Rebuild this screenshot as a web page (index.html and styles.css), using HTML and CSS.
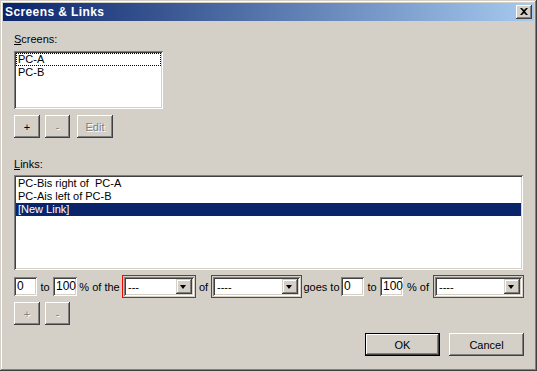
FILE: index.html
```html
<!DOCTYPE html>
<html lang="en">
<head>
    <meta charset="UTF-8">
    <title>Screens &amp; Links</title>
    <link rel="stylesheet" href="styles.css">
</head>
<body>

<div class="window">
    <div class="titlebar">
        <span class="title">Screens &amp; Links</span>
        <button class="close-btn">
            <svg width="8" height="7" viewBox="0 0 8 7">
                <path d="M0 0h2l2 2l2-2h2l-3 3.5l3 3.5h-2l-2-2l-2 2h-2l3-3.5z" fill="#000"/>
            </svg>
        </button>
    </div>

    <div class="dialog">
        <div class="label label-screens"><u>S</u>creens:</div>
        <div class="listbox screens-list">
            <div class="item focus">PC-A</div>
            <div class="item">PC-B</div>
        </div>
        <div class="btn-row">
            <button class="btn btn-plus">+</button>
            <button class="btn btn-minus disabled">-</button>
            <button class="btn btn-edit disabled">Edit</button>
        </div>

        <div class="label label-links"><u>L</u>inks:</div>
        <div class="listbox links-list">
            <div class="item">PC-Bis right of  PC-A</div>
            <div class="item">PC-Ais left of PC-B</div>
            <div class="item selected">[New Link]</div>
        </div>

        <div class="link-row">
            <div class="field w23">0</div>
            <span class="txt w16">to</span>
            <div class="field w24">100</div>
            <span class="txt w45">% of the</span>
            <div class="combo w74">
                <div class="combo-box"><span>---</span><span class="drop"></span></div>
            </div>
            <span class="txt w15">of</span>
            <div class="combo w91">
                <div class="combo-box"><span>----</span><span class="drop"></span></div>
            </div>
            <span class="txt w39">goes to</span>
            <div class="field w23">0</div>
            <span class="txt w16">to</span>
            <div class="field w23">100</div>
            <span class="txt w30">% of</span>
            <div class="combo w91">
                <div class="combo-box"><span>----</span><span class="drop"></span></div>
            </div>
        </div>

        <div class="btn-row row2">
            <button class="btn btn-plus disabled">+</button>
            <button class="btn btn-minus disabled">-</button>
        </div>

        <div class="footer">
            <button class="btn btn-wide default">OK</button>
            <button class="btn btn-wide">Cancel</button>
        </div>
    </div>
</div>

</body>
</html>
```

FILE: styles.css
```css
* { margin: 0; padding: 0; box-sizing: border-box; }
body {
    font-family: "Liberation Sans", Arial, sans-serif;
    font-size: 11px;
    background: #d4d0c8;
    color: #000;
}
.window {
    width: 537px; height: 371px; padding: 3px;
    background: #d4d0c8;
    box-shadow: inset -1px -1px #404040, inset 1px 1px #d4d0c8,
                inset -2px -2px #808080, inset 2px 2px #fff;
}
.titlebar {
    height: 18px; display: flex; align-items: center; justify-content: space-between;
    padding: 0 2px 0 2px;
    background: linear-gradient(90deg, #0a246a, #a6caf0);
}
.title { color: #fff; font-weight: bold; font-size: 12px; letter-spacing: 0.4px; }
.close-btn {
    width: 16px; height: 14px; border: none; background: #d4d0c8;
    display: flex; align-items: center; justify-content: center;
    box-shadow: inset -1px -1px #404040, inset 1px 1px #fff,
                inset -2px -2px #808080, inset 2px 2px #d4d0c8;
    padding-bottom: 1px;
}
.dialog { padding: 0 10px 0 11px; display: flex; flex-direction: column; }
.label { line-height: 13px; }
.label-screens { margin-top: 12px; }
.label-links { margin-top: 20px; }

.listbox {
    background: #fff; padding: 2px;
    box-shadow: inset 1px 1px #808080, inset -1px -1px #fff,
                inset 2px 2px #404040, inset -2px -2px #d4d0c8;
}
.screens-list { width: 149px; height: 58px; margin-top: 5px; }
.links-list { width: 509px; height: 95px; margin-top: 4px; }
.item { height: 13px; line-height: 13px; padding-left: 2px; white-space: pre; }
.item.focus { outline: 1px dotted #000; outline-offset: -1px; }
.item.selected { background: #0a246a; color: #fff; }

.btn {
    height: 23px; border: none; background: #d4d0c8;
    font-family: inherit; font-size: 11px; color: #000;
    box-shadow: inset -1px -1px #404040, inset 1px 1px #fff,
                inset -2px -2px #808080, inset 2px 2px #d4d0c8;
}
.btn.disabled { color: #808080; text-shadow: 1px 1px #fff; }
.btn-row { display: flex; margin-top: 6px; }
.btn-row.row2 { margin-top: 4px; }
.btn-plus { width: 26px; }
.btn-minus { width: 25px; margin-left: 5px; }
.btn-edit { width: 36px; margin-left: 7px; }

.link-row { display: flex; align-items: center; height: 23px; margin-top: 5px; }
.txt { text-align: center; flex: none; white-space: nowrap; }
.field {
    height: 19px; line-height: 15px; padding: 2px 3px; background: #fff; flex: none;
    font-size: 12px;
    box-shadow: inset 1px 1px #808080, inset -1px -1px #fff,
                inset 2px 2px #404040, inset -2px -2px #d4d0c8;
}
.combo { height: 23px; border: 1px solid #f00; padding: 1px; flex: none; }
.combo-box {
    height: 19px; background: #fff; padding: 2px 2px 2px 4px;
    display: flex; justify-content: space-between; align-items: center;
    box-shadow: inset 1px 1px #808080, inset -1px -1px #fff,
                inset 2px 2px #404040, inset -2px -2px #d4d0c8;
}
.drop {
    width: 16px; height: 15px; background: #d4d0c8; position: relative;
    box-shadow: inset -1px -1px #404040, inset 1px 1px #d4d0c8,
                inset -2px -2px #808080, inset 2px 2px #fff;
}
.drop::after {
    content: ""; position: absolute; left: 4px; top: 6px;
    border-left: 3.5px solid transparent; border-right: 3.5px solid transparent;
    border-top: 4px solid #000;
}
.w15 { width: 15px; } .w16 { width: 16px; } .w23 { width: 23px; } .w24 { width: 24px; }
.w30 { width: 30px; } .w39 { width: 39px; } .w45 { width: 45px; }
.w74 { width: 74px; } .w91 { width: 91px; }

.footer { display: flex; justify-content: flex-end; gap: 9px; margin-top: 8px; }
.btn-wide { width: 75px; }
.btn.default {
    box-shadow: inset 0 0 0 1px #000, inset -2px -2px #404040, inset 2px 2px #fff,
                inset -3px -3px #808080;
}
```
